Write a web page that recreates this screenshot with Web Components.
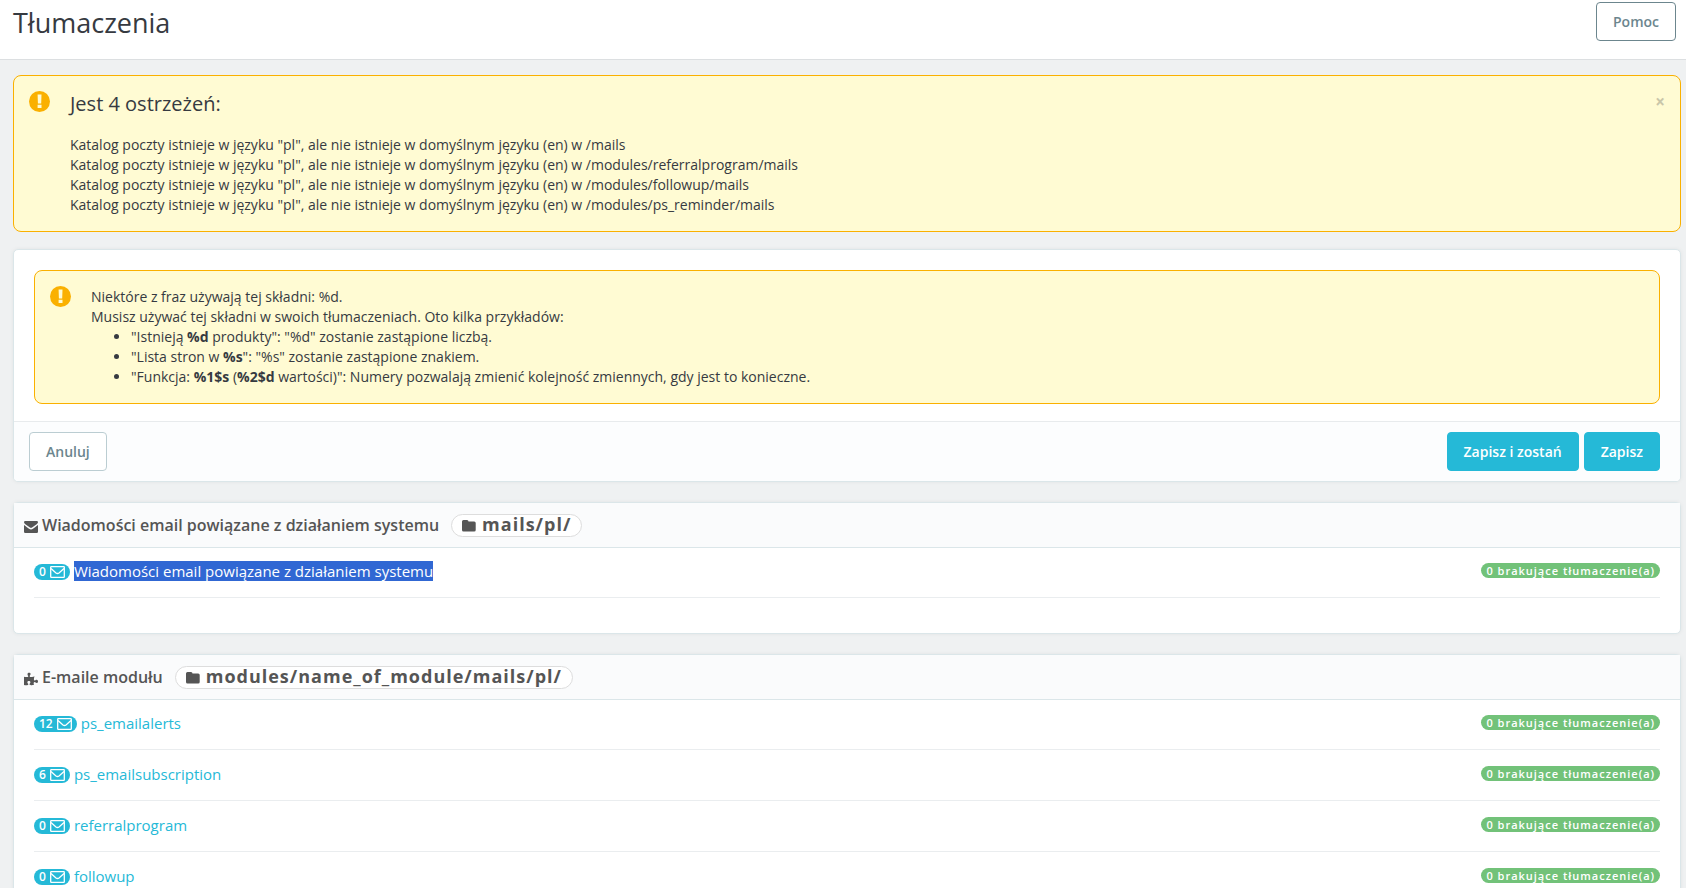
<!DOCTYPE html>
<html lang="pl">
<head>
<meta charset="utf-8">
<title>Tłumaczenia</title>
<style>
  body {
    margin: 0;
    background: #eff1f2;
    color: #363a41;
    font: 14px/20px "Open Sans", "Noto Sans", sans-serif;
  }
</style>
</head>
<body>
<translations-page></translations-page>

<template id="tpl-page">
  <style>
    :host { display: block; }
    header {
      display: flex;
      justify-content: space-between;
      align-items: flex-start;
      min-height: 59px;
      padding: 0 10px 0 13px;
      background: #fff;
      border-bottom: 1px solid #dcdfe1;
    }
    h1 { margin: 4px 0 0; font-size: 27px; line-height: 38px; font-weight: 400; }
    header action-button { margin-top: 2px; }
    main { display: flex; flex-direction: column; gap: 20px; padding: 15px 5px 20px 13px; }
    notice-box.top { margin-bottom: -3px; }
    .lead { margin: 0 0 18px; font-size: 20px; line-height: 26px; font-weight: 400; }
    p { margin: 0; }
    ul { margin: 0; padding-left: 40px; }
    .intro { padding: 20px 20px 17px; }
    .intro notice-box { --text-top: 1px; }
    .actions {
      display: flex;
      gap: 5px;
      padding: 10px 20px 10px 15px;
      border-top: 1px solid #e8ebed;
      background: #fcfdfe;
      border-radius: 0 0 4px 4px;
    }
    .actions .first { margin-right: auto; }
    .rows { padding: 0 20px; margin-top: -1px; }
    .rows.single { padding-bottom: 35px; }
  </style>
  <header>
    <h1>Tłumaczenia</h1>
    <action-button kind="outline">Pomoc</action-button>
  </header>
  <main>
    <notice-box class="top" closable>
      <h2 class="lead">Jest 4 ostrzeżeń:</h2>
      <p>Katalog poczty istnieje w języku "pl", ale nie istnieje w domyślnym języku (en) w /mails</p>
      <p>Katalog poczty istnieje w języku "pl", ale nie istnieje w domyślnym języku (en) w /modules/referralprogram/mails</p>
      <p>Katalog poczty istnieje w języku "pl", ale nie istnieje w domyślnym języku (en) w /modules/followup/mails</p>
      <p>Katalog poczty istnieje w języku "pl", ale nie istnieje w domyślnym języku (en) w /modules/ps_reminder/mails</p>
    </notice-box>

    <card-panel>
      <div class="intro">
        <notice-box>
          <p>Niektóre z fraz używają tej składni: %d.</p>
          <p>Musisz używać tej składni w swoich tłumaczeniach. Oto kilka przykładów:</p>
          <ul>
            <li>"Istnieją <b>%d</b> produkty": "%d" zostanie zastąpione liczbą.</li>
            <li>"Lista stron w <b>%s</b>": "%s" zostanie zastąpione znakiem.</li>
            <li>"Funkcja: <b>%1$s</b> (<b>%2$d</b> wartości)": Numery pozwalają zmienić kolejność zmiennych, gdy jest to konieczne.</li>
          </ul>
        </notice-box>
      </div>
      <div class="actions">
        <action-button class="first" kind="default">Anuluj</action-button>
        <action-button kind="primary">Zapisz i zostań</action-button>
        <action-button kind="primary">Zapisz</action-button>
      </div>
    </card-panel>

    <card-panel>
      <panel-heading slot="heading" icon="envelope" path="mails/pl/">Wiadomości email powiązane z działaniem systemu</panel-heading>
      <div class="rows single">
        <mail-row count="0" selected>Wiadomości email powiązane z działaniem systemu</mail-row>
      </div>
    </card-panel>

    <card-panel>
      <panel-heading slot="heading" icon="puzzle" path="modules/name_of_module/mails/pl/">E-maile modułu</panel-heading>
      <div class="rows">
        <mail-row count="12">ps_emailalerts</mail-row>
        <mail-row count="6">ps_emailsubscription</mail-row>
        <mail-row count="0">referralprogram</mail-row>
        <mail-row count="0">followup</mail-row>
      </div>
    </card-panel>
  </main>
</template>

<template id="tpl-button">
  <style>
    :host { display: block; }
    button {
      display: block;
      height: 39px;
      padding: 0 16px;
      border: 1px solid #bbcdd2;
      border-radius: 4px;
      background: #fff;
      color: #6c868e;
      font: 600 14px/20px "Open Sans", "Noto Sans", sans-serif;
      white-space: nowrap;
      cursor: pointer;
    }
    :host([kind="outline"]) button { border-color: #6c868e; }
    :host([kind="primary"]) button { border-color: #25b9d7; background: #25b9d7; color: #fff; }
  </style>
  <button type="button"><slot></slot></button>
</template>

<template id="tpl-notice">
  <style>
    :host {
      display: flex;
      align-items: flex-start;
      padding: 15px;
      background: #fffbd3;
      border: 1px solid #fab000;
      border-radius: 8px;
    }
    svg { flex: none; width: 21px; height: 21px; margin-right: 20px; }
    .text { flex: 1; padding: var(--text-top, 0) 0 1px; }
    button {
      width: 20px;
      height: 22px;
      margin-right: -5px;
      padding: 0;
      border: 0;
      background: none;
      color: #c9c6a9;
      font: 700 17px/22px "Open Sans", "Noto Sans", sans-serif;
      cursor: pointer;
    }
    :host(:not([closable])) button { display: none; }
  </style>
  <svg viewBox="0 0 21 21" aria-hidden="true">
    <circle cx="10.500" cy="10.500" r="10.500" fill="#fab000"/>
    <path d="M8.600 3.600h3.900l-.3 8.800H8.900zM8.600 13.800h3.900v3.200H8.600z" fill="#fffbd3"/>
  </svg>
  <div class="text"><slot></slot></div>
  <button type="button" aria-label="Zamknij">×</button>
</template>

<template id="tpl-panel">
  <style>
    :host {
      display: block;
      background: #fff;
      border: 1px solid #dbe6e9;
      border-radius: 5px;
      box-shadow: 0 0 4px rgba(0, 0, 0, .06);
    }
  </style>
  <slot name="heading"></slot>
  <slot></slot>
</template>

<template id="tpl-heading">
  <style>
    :host {
      display: flex;
      align-items: center;
      height: 44px;
      padding: 0 10px;
      background: #fafbfc;
      border-bottom: 1px solid #dbe6e9;
      color: #555;
    }
    svg { flex: none; fill: #555; }
    .lead { width: 14px; height: 14px; margin: 3px 4px 0 0; }
    h3 { margin: 0; font-size: 16px; line-height: 22px; font-weight: 600; }
    .path {
      display: flex;
      align-items: center;
      height: 21px;
      margin-left: 12px;
      padding: 0 10px;
      background: #fff;
      border: 1px solid #ddd;
      border-radius: 12px;
      font-size: 18px;
      font-weight: 700;
      letter-spacing: 1px;
      line-height: 21px;
    }
    .path svg { width: 14px; height: 12px; margin: 2px 6px 0 0; }
    .value { margin-top: -1px; }
  </style>
  <svg class="lead" aria-hidden="true"></svg>
  <h3><slot></slot></h3>
  <span class="path">
    <svg viewBox="0 0 14 12" aria-hidden="true"><path d="M1.500 0h3.500q1.500 0 1.500 1.600h5.700q1.500 0 1.500 1.500v6.900q0 1.500-1.500 1.500H1.500Q0 11.500 0 10V1.500Q0 0 1.500 0z"/></svg>
    <span class="value"></span>
  </span>
</template>

<template id="tpl-row">
  <style>
    :host {
      display: flex;
      align-items: flex-start;
      height: 33px;
      padding-top: 17px;
      border-bottom: 1px solid #eaedef;
    }
    .count {
      display: flex;
      align-items: center;
      gap: 4px;
      height: 16px;
      padding: 0 5px;
      border-radius: 8px;
      background: #25b9d7;
      color: #fff;
      font-size: 12px;
      line-height: 16px;
      font-weight: 600;
    }
    .count svg { width: 15px; height: 12px; }
    a { margin: -3px auto 0 4px; font-size: 15px; line-height: 20px; color: #25b9d7; text-decoration: none; }
    a.current { background: #3067d3; color: #fff; }
    .missing {
      height: 15px;
      margin-top: -1px;
      padding: 0 5px;
      border-radius: 8px;
      background: #72c279;
      color: #fff;
      font-size: 11px;
      line-height: 15px;
      font-weight: 600;
      letter-spacing: 1px;
    }
  </style>
  <span class="count"><span class="number"></span><svg viewBox="0 0 15 12" fill="none" stroke="#fff" stroke-width="1.300" aria-hidden="true"><rect x=".7" y=".7" width="13.600" height="10.600" rx=".6"/><path d="M1 2.500l5 4.400q1.500 1.200 3 0l5-4.400"/></svg></span>
  <a href="#"><slot></slot></a>
  <span class="missing">0 brakujące tłumaczenie(a)</span>
</template>

<script>
  const LEAD_ICONS = {
    envelope: {
      box: "0 0 14 12",
      path: "M0 1.200Q0 0 1.200 0h11.600Q14 0 14 1.200q0 .9-1 1.700L8.400 6.200q-1.400 1-2.800 0L1 2.900Q0 2.100 0 1.200zM0 4q.3.300 5 3.700 2 1.400 4 0Q13.700 4.300 14 4v6.700q0 1.300-1.300 1.300H1.300Q0 12 0 10.700z"
    },
    puzzle: {
      box: "0 0 576 512",
      path: "M519.442 288.651c-41.519 0-59.5 31.593-82.058 31.593C377.409 320.244 432 144 432 144s-196.288 80-196.288-3.297c0-35.827 36.288-46.250 36.288-85.985C272 19.216 243.885 0 210.539 0c-34.654 0-66.366 18.891-66.366 56.346 0 41.364 31.711 59.277 31.711 81.750C175.885 207.719 0 166.758 0 166.758v333.237s178.635 41.047 178.635-28.662c0-22.473-40-40.107-40-81.471 0-37.456 29.250-56.346 63.577-56.346 33.673 0 61.788 19.216 61.788 54.717 0 39.735-36.288 50.158-36.288 85.985 0 60.803 129.675 25.730 181.230 25.730 0 0-34.725-120.101 25.827-120.101 35.962 0 46.423 36.152 86.308 36.152C556.712 416 576 387.990 576 354.443c0-34.199-18.962-65.792-56.558-65.792z"
    }
  };

  class TemplateElement extends HTMLElement {
    constructor() {
      super();
      const tpl = document.getElementById(this.constructor.template);
      this.attachShadow({ mode: "open" }).append(tpl.content.cloneNode(true));
    }
  }

  class ActionButton extends TemplateElement { static template = "tpl-button"; }
  class CardPanel extends TemplateElement { static template = "tpl-panel"; }
  class TranslationsPage extends TemplateElement { static template = "tpl-page"; }

  class NoticeBox extends TemplateElement {
    static template = "tpl-notice";
    connectedCallback() {
      this.shadowRoot.querySelector("button").onclick = () => this.remove();
    }
  }

  class PanelHeading extends TemplateElement {
    static template = "tpl-heading";
    connectedCallback() {
      const icon = LEAD_ICONS[this.getAttribute("icon")];
      const svg = this.shadowRoot.querySelector(".lead");
      svg.setAttribute("viewBox", icon.box);
      svg.innerHTML = `<path d="${icon.path}"/>`;
      this.shadowRoot.querySelector(".value").textContent = this.getAttribute("path");
    }
  }

  class MailRow extends TemplateElement {
    static template = "tpl-row";
    connectedCallback() {
      this.shadowRoot.querySelector(".number").textContent = this.getAttribute("count");
      const link = this.shadowRoot.querySelector("a");
      if (this.hasAttribute("selected")) link.className = "current";
    }
  }

  customElements.define("action-button", ActionButton);
  customElements.define("notice-box", NoticeBox);
  customElements.define("card-panel", CardPanel);
  customElements.define("panel-heading", PanelHeading);
  customElements.define("mail-row", MailRow);
  customElements.define("translations-page", TranslationsPage);
</script>
</body>
</html>
